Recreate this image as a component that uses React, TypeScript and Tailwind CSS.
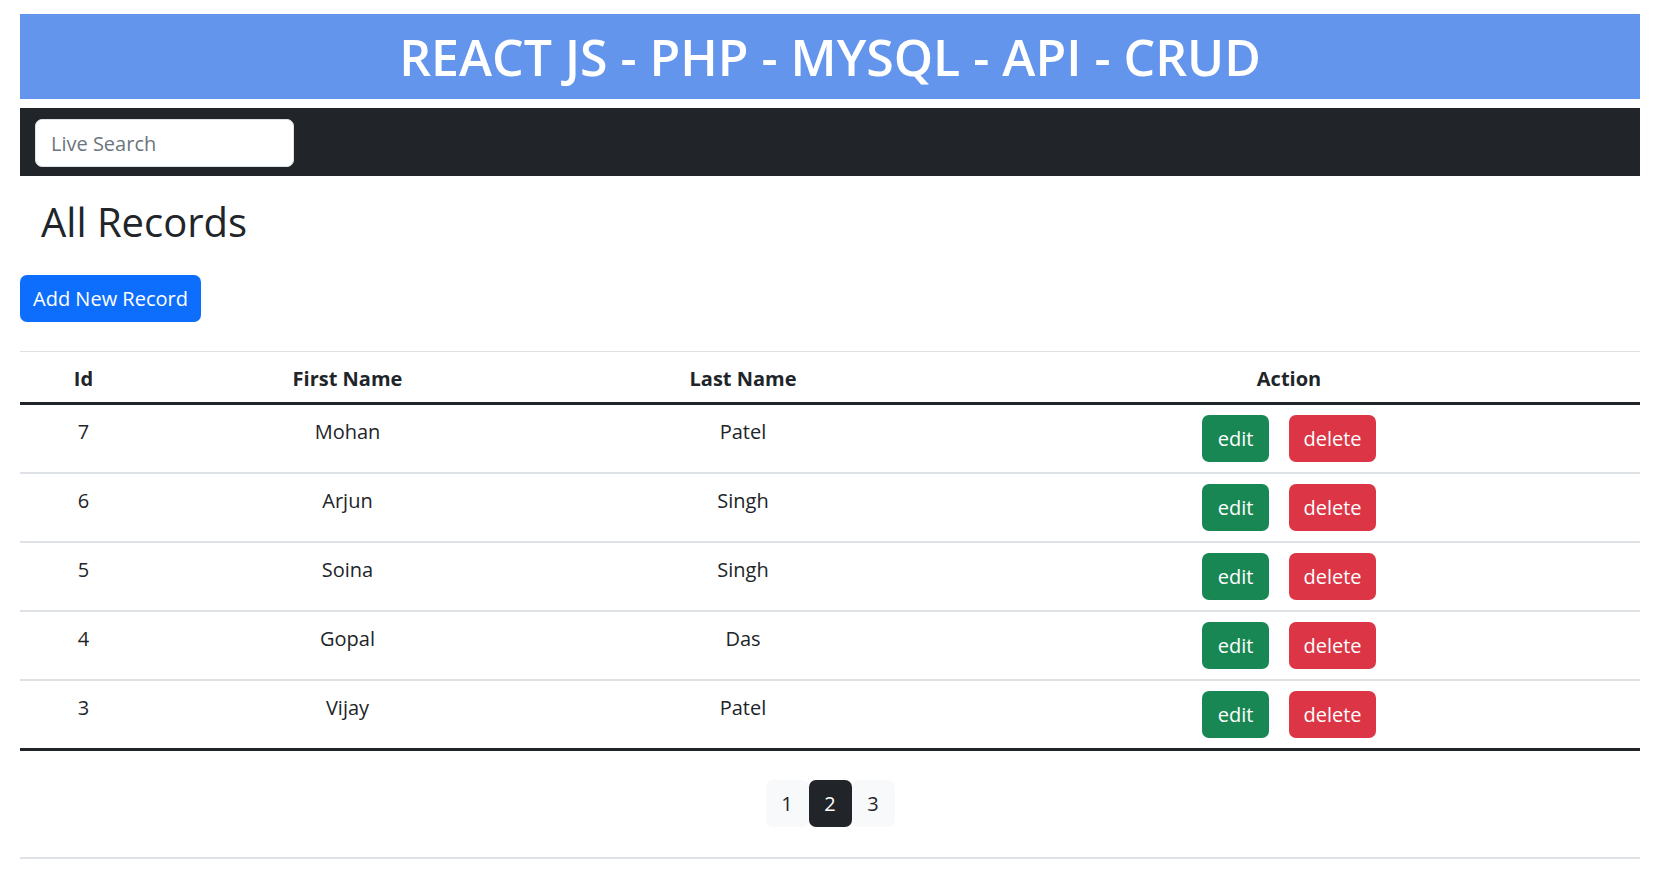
import { useState } from 'react';

const RECORDS = [
  { id: 7, first_name: 'Mohan', last_name: 'Patel' },
  { id: 6, first_name: 'Arjun', last_name: 'Singh' },
  { id: 5, first_name: 'Soina', last_name: 'Singh' },
  { id: 4, first_name: 'Gopal', last_name: 'Das' },
  { id: 3, first_name: 'Vijay', last_name: 'Patel' },
];

const PAGES = [1, 2, 3];

export default function App() {
  const [search, setSearch] = useState('');
  const [page, setPage] = useState(2);

  const rows = RECORDS.filter((r) =>
    search
      ? `${r.first_name} ${r.last_name}`.toLowerCase().includes(search.toLowerCase())
      : true
  );

  return (
    <div
      className="min-h-screen bg-white pl-[20px] pr-[26px] pt-[14px] text-[20px] text-[#212529]"
      style={{ fontFamily: '"Open Sans", "Noto Sans", sans-serif' }}
    >
      {/* Title bar */}
      <h1 className="flex h-[85px] items-center justify-center bg-[#6495ed] text-[50px] font-semibold leading-[1.2] text-white">
        REACT JS - PHP - MYSQL - API - CRUD
      </h1>

      {/* Navbar with live search */}
      <nav className="mt-[9px] h-[68px] bg-[#212529] px-[15px] pt-[11px]">
        <input
          type="text"
          placeholder="Live Search"
          value={search}
          onChange={(e) => setSearch(e.target.value)}
          className="h-[48px] w-[259px] rounded-[7px] border border-[#dee2e6] bg-white px-[15px] text-[20px] text-[#212529] placeholder:text-[#6c757d] focus:outline-none"
        />
      </nav>

      <h2 className="mt-[22px] pl-[21px] text-[40px] font-normal leading-[1.2]">All Records</h2>

      <button className="mt-[29px] h-[47px] w-[181px] rounded-[7px] bg-[#0d6efd] text-[20px] text-white hover:bg-[#0b5ed7]">
        Add New Record
      </button>

      {/* Records table */}
      <table className="mt-[29px] w-full table-fixed border-collapse border-t border-[#dee2e6] text-center">
        <thead>
          <tr className="border-b-[3px] border-[#212529]">
            <th className="w-[127px] px-[10px] pb-[8px] pt-[12px] font-bold leading-[30px]">Id</th>
            <th className="w-[401px] px-[10px] pb-[8px] pt-[12px] font-bold leading-[30px]">First Name</th>
            <th className="w-[390px] px-[10px] pb-[8px] pt-[12px] font-bold leading-[30px]">Last Name</th>
            <th className="px-[10px] pb-[8px] pt-[12px] font-bold leading-[30px]">Action</th>
          </tr>
        </thead>
        <tbody>
          {rows.map((row, idx) => (
            <tr
              key={row.id}
              className={
                idx === rows.length - 1
                  ? 'border-b-[3px] border-[#212529]'
                  : 'border-b-2 border-[#dee2e6]'
              }
            >
              <td className="px-[10px] pt-[12px] align-top leading-[30px]">{row.id}</td>
              <td className="px-[10px] pt-[12px] align-top leading-[30px]">{row.first_name}</td>
              <td className="px-[10px] pt-[12px] align-top leading-[30px]">{row.last_name}</td>
              <td className="px-[10px] py-[10px] align-top">
                <div className="flex justify-center gap-[20px]">
                  <button className="h-[47px] w-[67px] rounded-[7px] bg-[#198754] text-[20px] text-white hover:bg-[#157347]">
                    edit
                  </button>
                  <button className="h-[47px] w-[87px] rounded-[7px] bg-[#dc3545] text-[20px] text-white hover:bg-[#bb2d3b]">
                    delete
                  </button>
                </div>
              </td>
            </tr>
          ))}
        </tbody>
      </table>

      {/* Pagination */}
      <div className="mt-[29px] flex justify-center">
        {PAGES.map((p) => (
          <button
            key={p}
            onClick={() => setPage(p)}
            className={`h-[47px] w-[43px] rounded-[7px] text-[20px] ${
              p === page ? 'bg-[#212529] text-white' : 'bg-[#f8f9fa] text-[#212529]'
            }`}
          >
            {p}
          </button>
        ))}
      </div>

      <hr className="mt-[30px] border-t-2 border-[#dee2e6]" />
    </div>
  );
}
